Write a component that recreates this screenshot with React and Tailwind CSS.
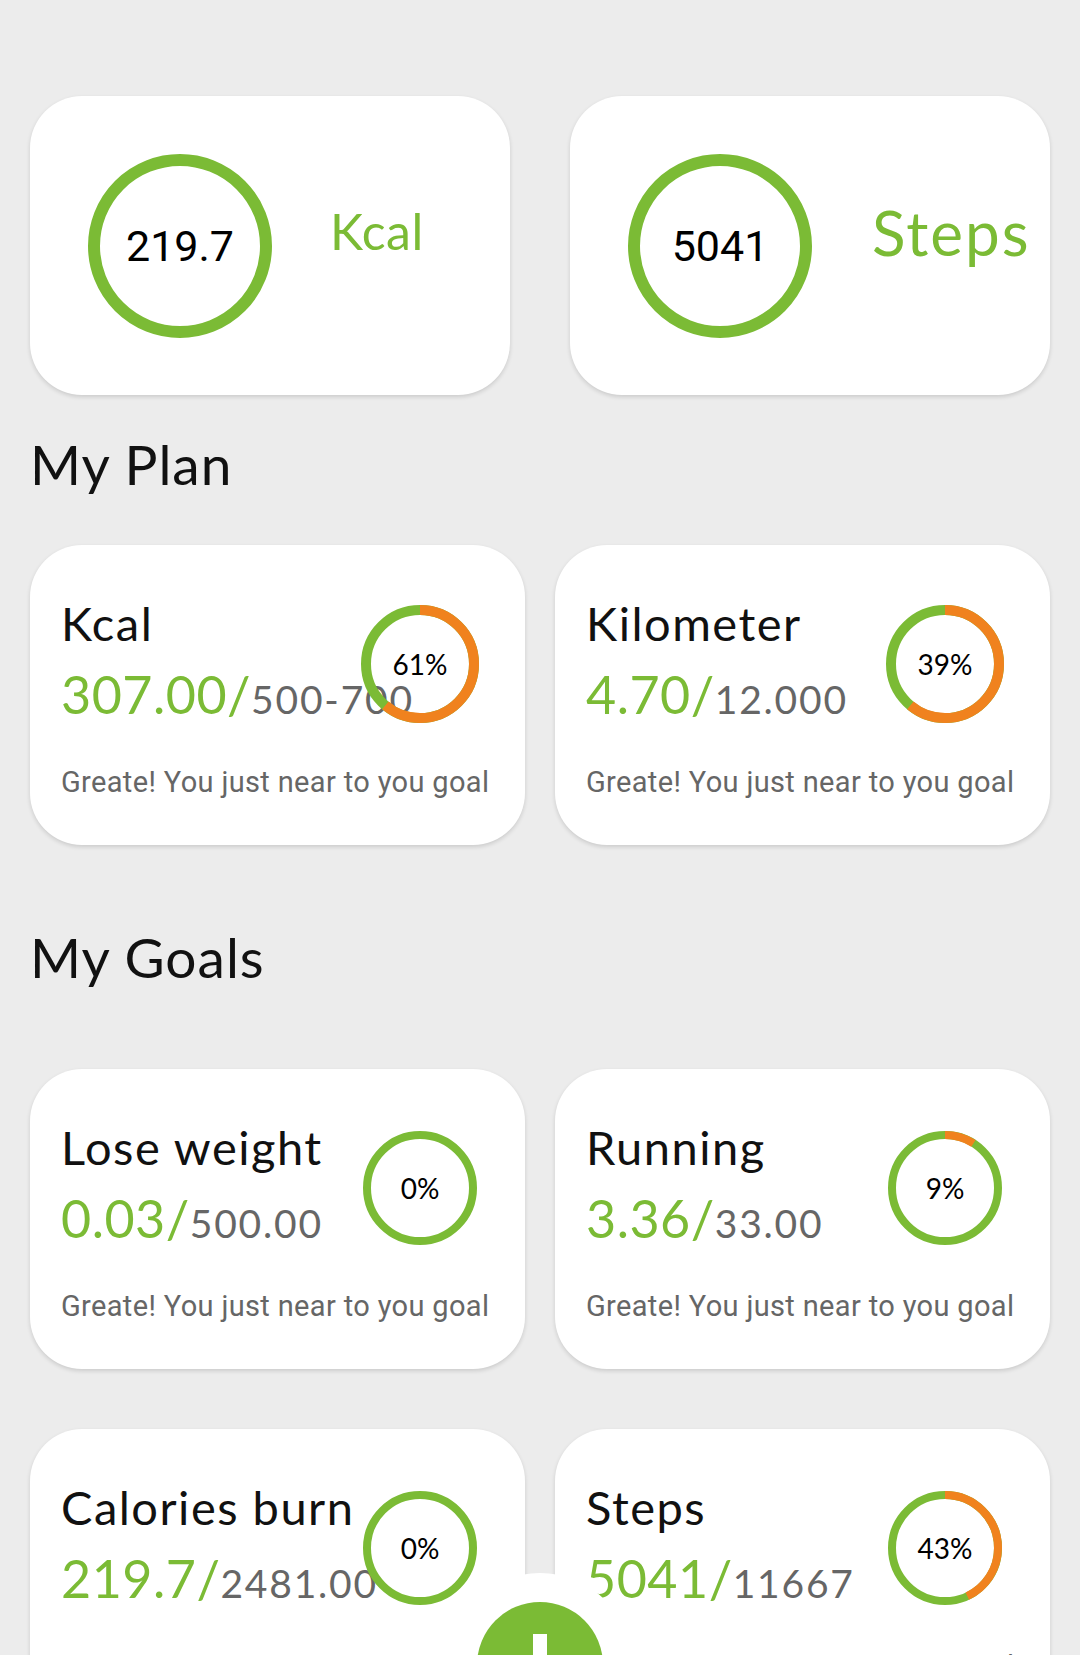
const GREEN = '#7bbb35';
const ORANGE = '#f0821e';

const plan = [
  { title: 'Kcal', value: '307.00/', target: '500-700', label: '61%', arc: 61 },
  { title: 'Kilometer', value: '4.70/', target: '12.000', label: '39%', arc: 61 },
];

const goals = [
  { title: 'Lose weight', value: '0.03/', target: '500.00', label: '0%', arc: 0 },
  { title: 'Running', value: '3.36/', target: '33.00', label: '9%', arc: 9 },
  { title: 'Calories burn', value: '219.7/', target: '2481.00', label: '0%', arc: 0 },
  { title: 'Steps', value: '5041/', target: '11667', label: '43%', arc: 43 },
];

const Ring = ({ size, stroke, arc }) => {
  const r = (size - stroke) / 2;
  const c = 2 * Math.PI * r;
  return (
    <svg width={size} height={size} viewBox={`0 0 ${size} ${size}`} className="absolute inset-0">
      <circle cx={size / 2} cy={size / 2} r={r} fill="none" stroke={GREEN} strokeWidth={stroke} />
      {arc > 0 && (
        <circle
          cx={size / 2}
          cy={size / 2}
          r={r}
          fill="none"
          stroke={ORANGE}
          strokeWidth={stroke}
          strokeDasharray={`${(c * arc) / 100} ${c}`}
          transform={`rotate(-90 ${size / 2} ${size / 2})`}
        />
      )}
    </svg>
  );
};

const SummaryCard = ({ value, unit, big }) => (
  <div className="h-[299px] bg-white rounded-[52px] shadow-[0_2px_4px_rgba(0,0,0,0.14)] flex pl-[58px]">
    <div className="relative w-[184px] h-[184px] mt-[58px] shrink-0 flex items-center justify-center">
      <Ring size={184} stroke={12} arc={0} />
      <span className="relative font-['Roboto',sans-serif] text-[43px] text-black leading-none">{value}</span>
    </div>
    {big ? (
      <span className="ml-[60px] mt-[106px] font-['Lato',sans-serif] text-[62px] leading-[60px] text-[#7bbb35] tracking-[2px]">{unit}</span>
    ) : (
      <span className="ml-[58px] mt-[110px] font-['Lato',sans-serif] text-[50px] leading-[50px] text-[#7bbb35] tracking-[0.5px]">{unit}</span>
    )}
  </div>
);

const GoalCard = ({ item, ringSize, ringStroke }) => (
  <div className="relative h-[300px] bg-white rounded-[52px] shadow-[0_2px_4px_rgba(0,0,0,0.14)] pl-[31px] pt-[55px]">
    <div className="font-['Lato',sans-serif] text-[47px] leading-[46px] text-[#111] tracking-[1.5px] whitespace-nowrap">{item.title}</div>
    <div className="mt-[22px] font-['Lato',sans-serif] text-[52px] leading-[52px] whitespace-nowrap">
      <span className="text-[#7bbb35] tracking-[0.5px]">{item.value}</span>
      <span className="text-[39px] leading-none text-[#666] tracking-[1.8px]">{item.target}</span>
    </div>
    <div className="mt-[48px] font-['Roboto',sans-serif] text-[29px] leading-[28px] text-[#666] tracking-[0.35px] whitespace-nowrap">
      Greate! You just near to you goal
    </div>
    <div
      className="absolute flex items-center justify-center"
      style={{ width: ringSize, height: ringSize, left: 390 - ringSize / 2, top: 119 - ringSize / 2 }}
    >
      <Ring size={ringSize} stroke={ringStroke} arc={item.arc} />
      <span className="relative font-['Lato',sans-serif] text-[28px] leading-none text-black">{item.label}</span>
    </div>
  </div>
);

export default function App() {
  return (
    <div className="relative h-[1655px] overflow-hidden bg-[#ececec] px-[30px] pt-[96px]">
      <div className="grid grid-cols-2 gap-[60px]">
        <SummaryCard value="219.7" unit="Kcal" />
        <SummaryCard value="5041" unit="Steps" big />
      </div>

      <h2 className="mt-[42px] font-['Lato',sans-serif] text-[55px] leading-[55px] text-[#111] tracking-[1px]">My Plan</h2>
      <div className="mt-[53px] grid grid-cols-2 gap-[30px]">
        {plan.map((p) => (
          <GoalCard key={p.title} item={p} ringSize={118} ringStroke={10} />
        ))}
      </div>

      <h2 className="mt-[85px] font-['Lato',sans-serif] text-[55px] leading-[55px] text-[#111] tracking-[1px]">My Goals</h2>
      <div className="mt-[84px] grid grid-cols-2 gap-x-[30px] gap-y-[60px]">
        {goals.map((g) => (
          <GoalCard key={g.title} item={g} ringSize={114} ringStroke={8} />
        ))}
      </div>

      {/* floating add button */}
      <div className="absolute left-[448px] top-[1573px] w-[184px] h-[184px] rounded-full bg-white" />
      <div className="absolute left-[477px] top-[1602px] w-[126px] h-[126px] rounded-full bg-[#7bbb35]">
        <div className="absolute left-[56px] top-[32px] w-[14px] h-[62px] bg-white" />
        <div className="absolute left-[32px] top-[56px] w-[62px] h-[14px] bg-white" />
      </div>
    </div>
  );
}
